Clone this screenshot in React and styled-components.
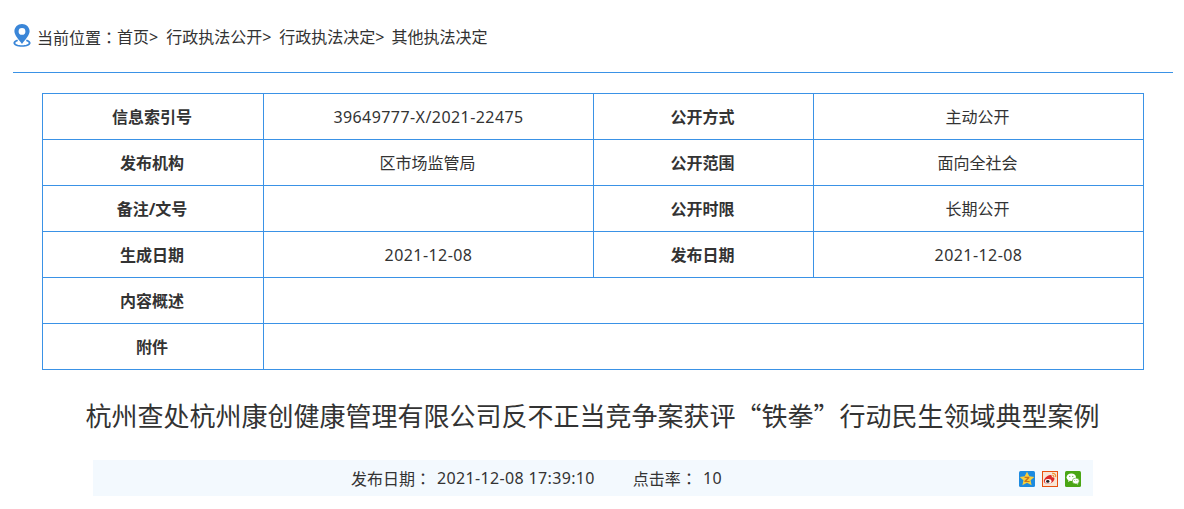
import React from "react";
import styled, { createGlobalStyle } from "styled-components";

const LATIN_FIRST = `"Noto Sans", "Noto Sans CJK SC", sans-serif`;
const CJK_FIRST = `"Noto Sans CJK SC", "Noto Sans", sans-serif`;
const BLUE = "#3a92e6";

const GlobalStyle = createGlobalStyle`
  html, body {
    margin: 0;
    padding: 0;
    background: #fff;
    font-family: ${LATIN_FIRST};
    color: #333;
  }
`;

const Page = styled.div`
  width: 1184px;
  height: 509px;
  overflow: hidden;
  padding: 0 11px 0 13px;
  box-sizing: border-box;
`;

const Crumbs = styled.div`
  height: 73px;
  box-sizing: border-box;
  border-bottom: 1px solid ${BLUE};
  padding-top: 24px;
  display: flex;
  align-items: flex-start;
  font-size: 16px;
  line-height: 26px;
`;

const PinIcon = styled.svg`
  width: 18px;
  height: 23px;
  flex: none;
  margin-right: 6px;
`;

const CrumbLink = styled.span`
  margin-left: ${(p) => p.$gap || 0}px;
`;

/* the full-width colon sits mid-cell in the reference, as in the TC glyphs */
const Colon = styled.span`
  font-family: "Noto Sans CJK TC", sans-serif;
`;

const Table = styled.table`
  width: 1101px;
  margin: 20px 0 0 29px;
  border-collapse: collapse;
  table-layout: fixed;
`;

const Cell = styled.td`
  height: 46px;
  padding: 0 ${(p) => (p.$latin ? 0 : 2)}px 0 0;
  box-sizing: border-box;
  border: 1px solid ${BLUE};
  text-align: center;
  font-size: 16px;
  line-height: 24px;
  font-weight: ${(p) => (p.$head ? 700 : 400)};
  letter-spacing: ${(p) => (p.$latin ? "0.43px" : "0")};
  color: #333;
`;

const Title = styled.h1`
  margin: 27px 0 0;
  padding-right: 1px;
  font-family: ${CJK_FIRST};
  font-size: 26px;
  line-height: 36px;
  font-weight: 400;
  text-align: center;
  color: #333;
`;

const MetaBar = styled.div`
  position: relative;
  width: 1000px;
  height: 36px;
  margin: 27px 0 0 80px;
  padding-left: 258px;
  box-sizing: border-box;
  background: #f3f9fe;
  display: flex;
  align-items: center;
  font-size: 16px;
`;

const MetaLabel = styled.span`
  margin-left: ${(p) => p.$gap || 0}px;
`;

const MetaValue = styled.span`
  margin-left: 6px;
  letter-spacing: 0.35px;
`;

const Shares = styled.div`
  position: absolute;
  right: 12px;
  top: 11px;
  display: flex;
  gap: 7px;
`;

const ShareIcon = styled.svg`
  width: 16px;
  height: 16px;
  display: block;
`;

const rows = [
  ["信息索引号", "39649777-X/2021-22475", "公开方式", "主动公开"],
  ["发布机构", "区市场监管局", "公开范围", "面向全社会"],
  ["备注/文号", "", "公开时限", "长期公开"],
  ["生成日期", "2021-12-08", "发布日期", "2021-12-08"],
];

const isLatin = (text) => /^[\w/-]+$/.test(text);

function Pin() {
  return (
    <PinIcon viewBox="0 0 18 23">
      <path
        d="M4.2 15.6C1.8 16.4.4 17.6.4 19c0 2.200 3.800 3.800 8.600 3.800s8.600-1.600 8.600-3.800c0-1.400-1.400-2.600-3.800-3.400l-.9 1.300c1.700.5 2.800 1.300 2.800 2.100 0 1.200-3 2.300-6.700 2.300s-6.700-1.100-6.700-2.300c0-.8 1.100-1.600 2.800-2.100z"
        fill="#3a86d8"
      />
      <path
        d="M9 0C4.700 0 1.400 3.200 1.400 7.300c0 4 4.500 8.500 7.600 12.700 3.100-4.200 7.600-8.700 7.600-12.700C16.600 3.200 13.300 0 9 0zm0 4a3.400 3.400 0 1 1 0 6.800A3.400 3.400 0 0 1 9 4z"
        fill="#3a86d8"
        fillRule="evenodd"
      />
    </PinIcon>
  );
}

function QzoneIcon() {
  return (
    <ShareIcon viewBox="0 0 16 16">
      <rect width="16" height="16" rx="1.5" fill="#1d8be0" />
      <path d="M8 .8l2.300 4.500 5 .6-3.700 3.300 1 5L8 11.700l-4.600 2.500 1-5L.7 5.900l5-.6z" fill="#f7cf3d" />
      <path d="M5.600 5.800h4.800v1.100L7.600 9.900h3v1.200H5.400V10l2.800-3H5.600z" fill="#c9761b" />
    </ShareIcon>
  );
}

function WeiboIcon() {
  return (
    <ShareIcon viewBox="0 0 16 16">
      <rect x=".5" y=".5" width="15" height="15" fill="#f8e6d6" stroke="#e8500f" />
      <path d="M1.800 10.300c0-2.700 3.400-6 6.400-6.300 1.600-.1 2 1.100 1.500 2.400 1.700-.5 3 .2 2.700 1.700-.4 2.600-3.400 4.700-6.400 4.700-2.500 0-4.200-.9-4.200-2.500z" fill="#dd2a2a" />
      <ellipse cx="6.200" cy="10.300" rx="3.300" ry="2.300" fill="#fff" />
      <ellipse cx="5.800" cy="10.400" rx="1.700" ry="1.400" fill="#222" />
      <path d="M10 2.300c2.500-.3 4.100 1.400 3.700 3.900M10.300 4.300c1.200-.1 1.700.7 1.500 1.800" fill="none" stroke="#ee8a22" strokeWidth="1.100" />
    </ShareIcon>
  );
}

function WechatIcon() {
  return (
    <ShareIcon viewBox="0 0 16 16">
      <rect width="16" height="16" rx="1.5" fill="#4aa615" />
      <ellipse cx="6.300" cy="6.300" rx="4.700" ry="3.800" fill="#fff" />
      <path d="M3.500 9l-.5 2.100 2.200-1.300z" fill="#fff" />
      <ellipse cx="10.800" cy="10" rx="3.500" ry="2.900" fill="#fff" stroke="#4aa615" strokeWidth=".6" />
      <path d="M12.500 12.300l.7 1.500-2-1z" fill="#fff" />
      <circle cx="4.800" cy="5.300" r=".6" fill="#4aa615" />
      <circle cx="7.800" cy="5.300" r=".6" fill="#4aa615" />
      <circle cx="9.700" cy="9.500" r=".45" fill="#4aa615" />
      <circle cx="11.900" cy="9.500" r=".45" fill="#4aa615" />
    </ShareIcon>
  );
}

export default function App() {
  return (
    <>
      <GlobalStyle />
      <Page>
        <Crumbs>
          <Pin />
          <CrumbLink>当前位置<Colon>：</Colon></CrumbLink>
          <CrumbLink>首页&gt;</CrumbLink>
          <CrumbLink $gap={8}>行政执法公开&gt;</CrumbLink>
          <CrumbLink $gap={8}>行政执法决定&gt;</CrumbLink>
          <CrumbLink $gap={7}>其他执法决定</CrumbLink>
        </Crumbs>
        <Table>
          <colgroup>
            <col style={{ width: 221 }} />
            <col style={{ width: 330 }} />
            <col style={{ width: 220 }} />
            <col style={{ width: 330 }} />
          </colgroup>
          <tbody>
            {rows.map((r) => (
              <tr key={r[0]}>
                <Cell $head>{r[0]}</Cell>
                <Cell $latin={isLatin(r[1])}>{r[1]}</Cell>
                <Cell $head>{r[2]}</Cell>
                <Cell $latin={isLatin(r[3])}>{r[3]}</Cell>
              </tr>
            ))}
            <tr>
              <Cell $head>内容概述</Cell>
              <Cell colSpan={3} />
            </tr>
            <tr>
              <Cell $head>附件</Cell>
              <Cell colSpan={3} />
            </tr>
          </tbody>
        </Table>
        <Title>杭州查处杭州康创健康管理有限公司反不正当竞争案获评“铁拳”行动民生领域典型案例</Title>
        <MetaBar>
          <MetaLabel>发布日期<Colon>：</Colon></MetaLabel>
          <MetaValue>2021-12-08 17:39:10</MetaValue>
          <MetaLabel $gap={38}>点击率<Colon>：</Colon></MetaLabel>
          <MetaValue>10</MetaValue>
          <Shares>
            <QzoneIcon />
            <WeiboIcon />
            <WechatIcon />
          </Shares>
        </MetaBar>
      </Page>
    </>
  );
}
